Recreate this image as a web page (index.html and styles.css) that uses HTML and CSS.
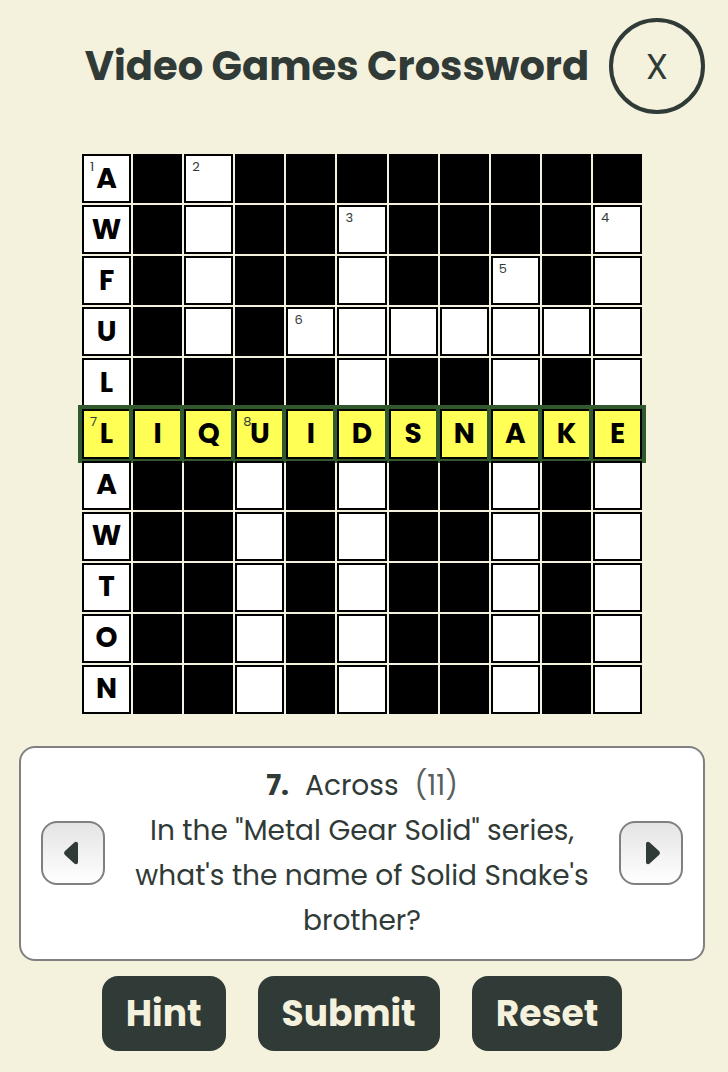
FILE: index.html
```html
<!DOCTYPE html>
<html lang="en">
<head>
<meta charset="utf-8">
<meta name="viewport" content="width=device-width, initial-scale=1">
<title>Video Games Crossword</title>
<link rel="stylesheet" href="styles.css">
</head>
<body>
<main class="page">
  <header class="header">
    <h1 class="title">Video Games Crossword</h1>
    <button class="close" type="button" aria-label="Close">X</button>
  </header>
  <section class="board" id="board" aria-label="Crossword grid"></section>
  <section class="clue" aria-label="Current clue">
    <button class="nav" type="button" aria-label="Previous clue">
      <svg class="arrow" viewBox="0 0 14 24" aria-hidden="true"><path d="M14 3V21C14 23 12 24 10.300 22.600L1 14Q-.8 12 1 10L10.300 1.400C12 0 14 1 14 3Z"/></svg>
    </button>
    <div class="clue-text">
      <p class="clue-head"><b>7.</b><span>Across</span><span class="count">(11)</span></p>
      <p>In the "Metal Gear Solid" series, what's the name of Solid Snake's brother?</p>
    </div>
    <button class="nav" type="button" aria-label="Next clue">
      <svg class="arrow flip" viewBox="0 0 14 24" aria-hidden="true"><path d="M14 3V21C14 23 12 24 10.300 22.600L1 14Q-.8 12 1 10L10.300 1.400C12 0 14 1 14 3Z"/></svg>
    </button>
  </section>
  <div class="actions">
    <button class="action" type="button">Hint</button>
    <button class="action" type="button">Submit</button>
    <button class="action" type="button">Reset</button>
  </div>
</main>
<script src="script.js"></script>
</body>
</html>
```
FILE: styles.css
```css
* { box-sizing: border-box; }
body {
  margin: 0;
  background: #f4f1dd;
  color: #303a37;
  font-family: Poppins, Inter, "Open Sans", sans-serif;
}
button, input { font-family: inherit; color: inherit; }
.page { padding: 18px 23px 20px 19px; }
.header { display: flex; align-items: center; padding-left: 46px; }
.title {
  flex: 1;
  margin: 0;
  font-size: 40px;
  line-height: 60px;
  font-weight: 700;
  text-align: center;
  white-space: nowrap;
}
.close {
  flex: none;
  width: 96px;
  height: 96px;
  padding: 0;
  border: 4px solid #303a37;
  border-radius: 50%;
  background: none;
  font-size: 36px;
  font-weight: 400;
}
.board {
  display: grid;
  grid-template-columns: repeat(11, 1fr);
  gap: 2px;
  max-width: 560px;
  margin: 40px auto 32px;
}
.cell { position: relative; aspect-ratio: 1; background: #000; }
.cell.active { box-shadow: 0 0 0 4px #305a2e; }
.letter {
  display: block;
  width: 100%;
  height: 100%;
  padding: 0;
  border: 2px solid #000;
  border-radius: 0;
  background: #fff;
  color: #000;
  font-size: 28px;
  font-weight: 700;
  text-align: center;
  outline: none;
}
.active .letter { background: #ffff55; }
.number {
  position: absolute;
  top: 4px;
  left: 8px;
  font-size: 13px;
  line-height: 18px;
  pointer-events: none;
}
.clue {
  display: flex;
  align-items: center;
  gap: 24px;
  padding: 15px 20px 16px;
  border: 2px solid #808080;
  border-radius: 16px;
  background: #fff;
}
.nav {
  flex: none;
  display: grid;
  place-items: center;
  width: 64px;
  height: 64px;
  padding: 0;
  border: 2px solid #808080;
  border-radius: 16px;
  background: linear-gradient(#e4e4e4, #fff);
}
.arrow { width: 14px; height: 24px; margin-right: 4px; fill: #303a37; }
.arrow.flip { transform: scaleX(-1); margin: 0 0 0 4px; }
.clue-text { flex: 1; font-size: 28px; line-height: 45px; text-align: center; }
.clue-text p { margin: 0; }
.clue-head { display: flex; justify-content: center; gap: 16px; }
.count { color: #59615f; }
.actions { display: flex; flex-wrap: wrap; justify-content: center; gap: 32px; margin-top: 15px; }
.action {
  padding: 10px 24px;
  border: 0;
  border-radius: 16px;
  background: #303a37;
  color: #f4f1dd;
  font-size: 36px;
  line-height: 55px;
  font-weight: 700;
}
```
FILE: script.js
```js
// "#" is a blocked square, "." an empty one, a letter is a filled one
const rows = [
  "A#.########",
  "W#.##.####.",
  "F#.##.##.#.",
  "U#.#.......",
  "L####.##.#.",
  "LIQUIDSNAKE",
  "A##.#.##.#.",
  "W##.#.##.#.",
  "T##.#.##.#.",
  "O##.#.##.#.",
  "N##.#.##.#."
];
const numbers = { "0,0": 1, "0,2": 2, "1,5": 3, "1,10": 4, "2,8": 5, "3,4": 6, "5,0": 7, "5,3": 8 };
const activeRow = 5;
const board = document.getElementById("board");

rows.forEach((row, r) => [...row].forEach((ch, c) => {
  const cell = document.createElement("div");
  cell.className = r === activeRow ? "cell active" : "cell";
  if (ch !== "#") {
    const input = document.createElement("input");
    input.className = "letter";
    input.maxLength = 1;
    input.value = ch === "." ? "" : ch;
    input.setAttribute("aria-label", `Row ${r + 1}, column ${c + 1}`);
    cell.append(input);
    const n = numbers[`${r},${c}`];
    if (n) {
      const label = document.createElement("span");
      label.className = "number";
      label.textContent = n;
      cell.append(label);
    }
  }
  board.append(cell);
}));
```
